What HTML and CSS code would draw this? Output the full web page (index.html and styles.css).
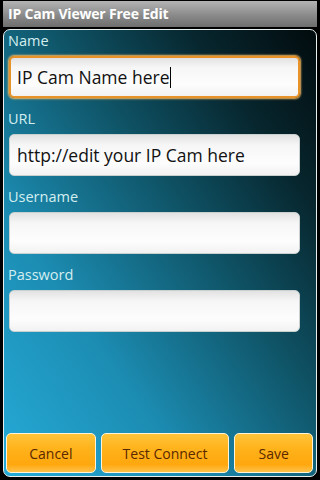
FILE: index.html
```html
<!DOCTYPE html>
<html>
<head>
<meta charset="utf-8">
<link rel="stylesheet" href="styles.css">
</head>
<body>
<div class="screen">
  <div class="titlebar">IP Cam Viewer Free Edit</div>
  <div class="panel">
    <div class="field">
      <div class="label">Name</div>
      <div class="input focused"><span class="val">IP Cam Name here</span><span class="caret"></span></div>
    </div>
    <div class="field">
      <div class="label">URL</div>
      <div class="input"><span class="val">http://edit your IP Cam here</span></div>
    </div>
    <div class="field">
      <div class="label">Username</div>
      <div class="input"></div>
    </div>
    <div class="field">
      <div class="label">Password</div>
      <div class="input"></div>
    </div>
    <div class="buttons">
      <div class="btn cancel">Cancel</div>
      <div class="btn test">Test Connect</div>
      <div class="btn save">Save</div>
    </div>
  </div>
</div>
</body>
</html>
```
FILE: styles.css
```css
html, body {
  margin: 0;
  padding: 0;
  background: #000;
  width: 320px;
  height: 480px;
  overflow: hidden;
}
.screen {
  width: 320px;
  height: 480px;
  box-sizing: border-box;
  padding: 1px 3px 3px 3px;
  display: flex;
  flex-direction: column;
  font-family: "Open Sans", "Noto Sans", sans-serif;
}
.titlebar {
  height: 26px;
  background: linear-gradient(#b4b4b4, #8a8a8a 55%, #6e6e6e);
  color: #fff;
  font-weight: bold;
  font-size: 14px;
  line-height: 26px;
  padding-left: 5px;
  letter-spacing: -0.2px;
}
.panel {
  margin-top: 2px;
  flex: 1;
  border: 1px solid #e6eeee;
  border-radius: 7px;
  background: linear-gradient(to top right, #25abd8 0%, #1c8cb2 30%, #0f5467 58%, #07262e 80%, #020b0d 100%);
  padding: 0 16px 3px 4px;
  display: flex;
  flex-direction: column;
}
.field {
  margin-bottom: 10px;
}
.label {
  height: 21px;
  line-height: 21px;
  font-size: 14.5px;
  color: #d4eef0;
  margin-bottom: 5px;
}
.input {
  height: 42px;
  margin-left: 1px;
  box-sizing: border-box;
  border-radius: 5px;
  background: linear-gradient(#e2e2e2, #f6f6f6 25%, #fdfdfd 70%, #f2f2f2);
  border: 1px solid #c8d0d0;
  display: flex;
  align-items: center;
  padding-left: 7px;
  font-size: 17.5px;
  color: #111;
}
.input.focused {
  border: 2px solid #e8922a;
  box-shadow: 0 0 2px 1px #f4b860;
  padding-left: 6px;
}
.caret {
  display: inline-block;
  width: 1px;
  height: 21px;
  background: #000;
  margin-left: 1px;
}
.buttons {
  margin-top: auto;
  margin-left: -2px;
  margin-right: -13px;
  display: flex;
  gap: 5px;
}
.btn {
  height: 40px;
  box-sizing: border-box;
  border: 1px solid #fff4d8;
  border-radius: 5px;
  background: linear-gradient(#ffc43a, #ffb21a 40%, #ffa70e 80%, #ffc24a);
  color: #5a2800;
  font-size: 14px;
  display: flex;
  align-items: center;
  justify-content: center;
}
.cancel { width: 90px; }
.test { width: 129px; }
.save { width: 79px; }
```
